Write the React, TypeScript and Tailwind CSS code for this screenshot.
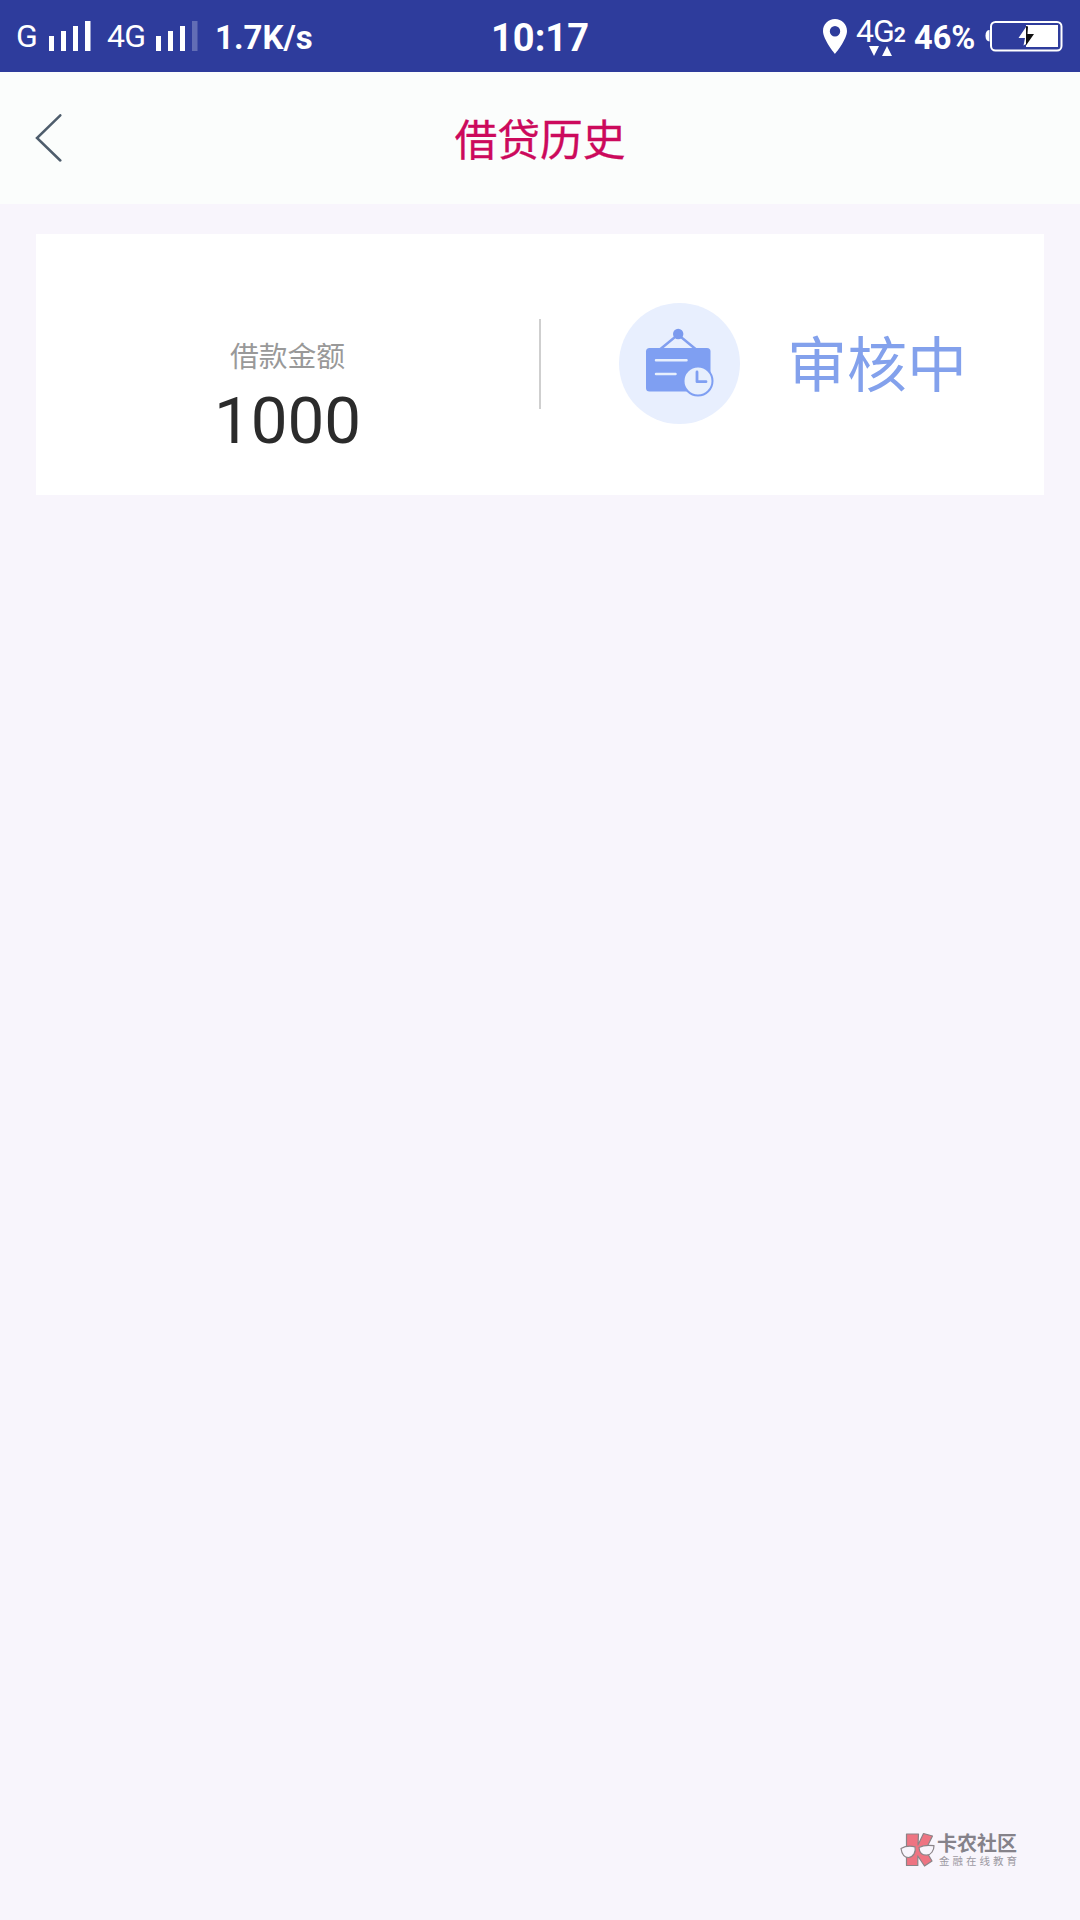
import React from "react";

function SignalBars({ weakLast = false }: { weakLast?: boolean }) {
  return (
    <svg width="42" height="30" viewBox="0 0 42 30" fill="#fff" className="shrink-0">
      <rect x="0" y="15" width="5" height="15" />
      <rect x="12" y="10" width="5" height="20" />
      <rect x="24" y="5" width="5" height="25" />
      <rect x="36" y="0" width="5.5" height="30" opacity={weakLast ? 0.25 : 1} />
    </svg>
  );
}

function LocationPin() {
  return (
    <svg width="24" height="35" viewBox="0 0 24 35" className="shrink-0">
      <path
        fill="#fff"
        fillRule="evenodd"
        d="M12 0C5.300 0 0 5.300 0 12c0 8.500 12 23 12 23s12-14.500 12-23C24 5.300 18.700 0 12 0Zm0 7a5.200 5.200 0 1 1 0 10.400A5.200 5.200 0 0 1 12 7Z"
      />
    </svg>
  );
}

function Battery() {
  return (
    <svg width="78" height="32" viewBox="0 0 78 32" className="shrink-0">
      <path d="M4.500 10C2 10 .5 12 .5 15.800S2 21.500 4.500 21.500Z" fill="#fff" />
      <rect x="6" y="2" width="70.500" height="28.500" rx="4.500" fill="none" stroke="#fff" strokeWidth="2" />
      <rect x="41" y="5" width="32" height="22" fill="#fff" />
      <path d="M41 7v17l-2.500 1.500 1.500-7.500h-6.500Z" fill="#fff" />
      <path d="M41 6l2 .5-.5 7.500h6.500L41 25.500Z" fill="#111" />
    </svg>
  );
}

function StatusBar() {
  return (
    <div className="flex h-[72px] items-center bg-[#2e3c9c] font-[Roboto,sans-serif] text-[32px] leading-[38px] text-white">
      <div className="flex w-[440px] items-center pl-[16px]">
        <span className="w-[33px] tracking-[-0.5px]">G</span>
        <SignalBars />
        <span className="ml-[16px] w-[49px] tracking-[-0.7px]">4G</span>
        <SignalBars weakLast />
        <span className="mt-[3px] ml-[17px] text-[33px] font-bold">1.7K/s</span>
      </div>
      <div className="mt-[3px] w-[200px] text-center text-[38px] font-bold">10:17</div>
      <div className="flex w-[440px] items-center pl-[183px]">
        <LocationPin />
        <div className="ml-[9px] flex h-[72px] w-[58px] flex-col pt-[12px]">
          <div className="flex items-baseline">
            <span className="tracking-[-1px]">4G</span>
            <span className="text-[21px] leading-none font-bold">2</span>
          </div>
          <svg width="24" height="10" viewBox="0 0 24 10" fill="#fff" className="-mt-[4px] ml-[13px]">
            <path d="M0 0h10L5 10ZM13 10h10L18 0Z" />
          </svg>
        </div>
        <span className="mt-[3px] w-[71px] text-[32.5px] font-bold">46%</span>
        <Battery />
      </div>
    </div>
  );
}

function NoticeIcon() {
  return (
    <svg width="121" height="121" viewBox="0 0 121 121" className="shrink-0">
      <circle cx="60.500" cy="60.500" r="60.500" fill="#e8effe" />
      <path d="M41.500 46L59 31.500 76.500 46" fill="none" stroke="#829fef" strokeWidth="2.500" />
      <circle cx="59.200" cy="31" r="5.200" fill="#7b9aee" />
      <rect x="27" y="45" width="64.500" height="43.500" rx="3.500" fill="#7f9ff2" />
      <path d="M37 57.200h30.500M37 71h19.500" stroke="#e7effd" strokeWidth="2.500" strokeLinecap="round" />
      <circle cx="79" cy="78" r="14.500" fill="#e7effd" stroke="#7f9ff2" strokeWidth="2" />
      <path d="M78 69v9.700h9" fill="none" stroke="#7f9ff2" strokeWidth="2.800" strokeLinecap="round" strokeLinejoin="round" />
    </svg>
  );
}

function CommunityLogo() {
  return (
    <svg width="35" height="36" viewBox="0 0 35 36" className="shrink-0">
      <g stroke="#8b8488" strokeWidth="1.200" strokeLinejoin="round">
        <path d="M6.500 2H18.500L18 13 23.500 1.500 32.500 4 25.500 18 32 29 24.500 34 17.800 24V33.500H6.500Z" fill="#ee7482" />
        <path d="M1 16.500c4-2.300 9-2.800 14-1.700 1.200 5-1.500 10.200-6.500 10.700C4.500 25.500 1.800 22 1 16.500Z" fill="#f8f5fc" />
        <path d="M19 15.500c4-2.200 9-2.700 15-1.800 0 5-3 9.300-7.500 9.500-4.500 0-7.200-3.200-7.500-7.700Z" fill="#f8f5fc" />
      </g>
    </svg>
  );
}

export default function App() {
  return (
    <div className="flex h-[1920px] w-[1080px] flex-col overflow-hidden bg-[#f8f5fc] font-['Noto_Sans_CJK_SC',sans-serif]">
      <StatusBar />
      <header className="flex h-[132px] items-center bg-[#fbfdfc]">
        <button className="flex w-[200px] pl-[35px]" aria-label="返回">
          <svg width="27" height="48" viewBox="0 0 27 48" fill="none" className="-mt-[1px]">
            <path d="M25.300 1.300L2 24l23.300 22.500" stroke="#4e5d6c" strokeWidth="2.500" strokeLinecap="round" />
          </svg>
        </button>
        <h1 className="-mt-[2px] w-[680px] text-center text-[42.8px] leading-[60px] font-normal text-[#cc0a5c] [-webkit-text-stroke:0.3px_#cc0a5c]">
          借贷历史
        </h1>
      </header>

      <main className="flex-1 px-[36px] pt-[30px]">
        <section className="flex h-[261px] bg-white">
          <div className="flex w-[503px] flex-col items-center pt-[101px]">
            <div className="text-[28.8px] leading-[40px] text-[#999]">借款金额</div>
            <div className="mt-[2px] font-[Roboto,sans-serif] text-[65.5px] leading-[88px] text-[#2b2b2b]">1000</div>
          </div>
          <div className="mt-[85px] h-[90px] w-[2px] bg-[#cfcfcf]" />
          <div className="flex flex-1 items-start pt-[69px] pl-[78px]">
            <NoticeIcon />
            <div className="-mt-[2px] ml-[47px] text-[60px] leading-[120px] text-[#83a1ec]">审核中</div>
          </div>
        </section>
      </main>

      <footer className="flex h-[88px] items-start pl-[900px]">
        <CommunityLogo />
        <div className="ml-[2px] flex flex-col text-[#85828a]">
          <span className="-mt-[1px] text-[20px] leading-[24px] font-bold">卡农社区</span>
          <span className="pl-[2px] text-[10.5px] leading-[12px] tracking-[3px] text-[#9c99a2]">金融在线教育</span>
        </div>
      </footer>
    </div>
  );
}
